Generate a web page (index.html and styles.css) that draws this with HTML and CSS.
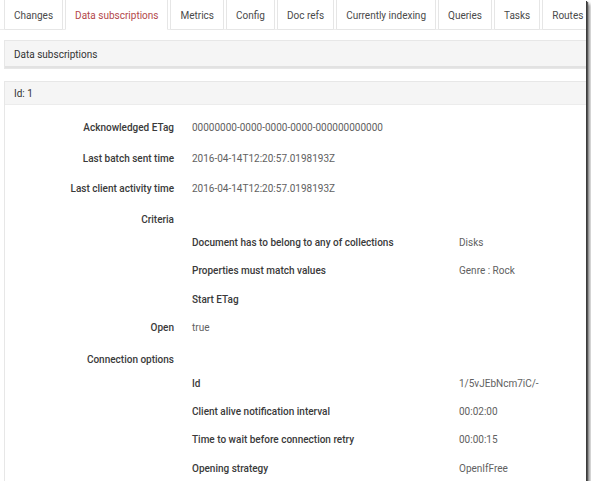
FILE: index.html
```html
<!DOCTYPE html>
<html lang="en">
<head>
<meta charset="utf-8">
<title>Data subscriptions</title>
<link rel="stylesheet" href="styles.css">
</head>
<body>
<div class="frame">
  <ul class="tabs">
    <li class="tab">Changes</li>
    <li class="tab active">Data subscriptions</li>
    <li class="tab">Metrics</li>
    <li class="tab">Config</li>
    <li class="tab">Doc refs</li>
    <li class="tab">Currently indexing</li>
    <li class="tab">Queries</li>
    <li class="tab">Tasks</li>
    <li class="tab">Routes</li>
  </ul>

  <section class="panel panel-title">
    <div class="panel-heading">Data subscriptions</div>
  </section>

  <section class="panel panel-sub">
    <div class="panel-heading">Id: 1</div>
    <div class="panel-body">
      <div class="row"><div class="label">Acknowledged ETag</div><div class="value">00000000-0000-0000-0000-000000000000</div></div>
      <div class="row"><div class="label">Last batch sent time</div><div class="value">2016-04-14T12:20:57.0198193Z</div></div>
      <div class="row"><div class="label">Last client activity time</div><div class="value">2016-04-14T12:20:57.0198193Z</div></div>

      <div class="row group"><div class="label">Criteria</div></div>
      <div class="nested">
        <div class="sub-row"><div class="sub-label">Document has to belong to any of collections</div><div class="value">Disks</div></div>
        <div class="sub-row"><div class="sub-label">Properties must match values</div><div class="value">Genre : Rock</div></div>
        <div class="sub-row"><div class="sub-label">Start ETag</div><div class="value"></div></div>
      </div>

      <div class="row row-open"><div class="label">Open</div><div class="value">true</div></div>

      <div class="row group"><div class="label">Connection options</div></div>
      <div class="nested">
        <div class="sub-row"><div class="sub-label">Id</div><div class="value">1/5vJEbNcm7iC/-</div></div>
        <div class="sub-row"><div class="sub-label">Client alive notification interval</div><div class="value">00:02:00</div></div>
        <div class="sub-row"><div class="sub-label">Time to wait before connection retry</div><div class="value">00:00:15</div></div>
        <div class="sub-row"><div class="sub-label">Opening strategy</div><div class="value">OpenIfFree</div></div>
      </div>
    </div>
  </section>
</div>
</body>
</html>
```

FILE: styles.css
```css
html, body {
  margin: 0;
  padding: 0;
  background: #ffffff;
}

body {
  font-family: Roboto, "Liberation Sans", Arial, sans-serif;
  font-size: 10px;
  color: #333333;
}

/* window with its drop shadow on the right and bottom */
.frame {
  width: 586px;
  height: 481px;
  overflow: hidden;
  background: #ffffff;
  box-shadow: 1px 1px 0 #3c3c3c, 2px 2px 1px #555555, 4px 4px 3px rgba(0, 0, 0, 0.45);
}

/* tab strip */
.tabs {
  list-style: none;
  display: flex;
  margin: -5px 0 0 0;
  padding: 0 0 0 4px;
  height: 35px;
  border-bottom: 1px solid #ececec;
  box-sizing: border-box;
}

.tab {
  flex: none;
  margin-right: 2px;
  padding: 5px 9px 0;
  height: 35px;
  line-height: 29px;
  box-sizing: border-box;
  border: 1px solid #e6e6e6;
  border-radius: 3px 3px 0 0;
  color: #4a4a4a;
  white-space: nowrap;
  background: #ffffff;
}

.tab.active {
  color: #b2474a;
  border-bottom-color: #ffffff;
}

/* panels */
.panel {
  margin-left: 4px;
  border: 1px solid #e7e7e7;
  border-right: none;
  background: #ffffff;
}

.panel-heading {
  background: #f5f5f5;
  padding-left: 9px;
  color: #333333;
}

.panel-title {
  margin-top: 10px;
}

.panel-title .panel-heading {
  height: 25px;
  line-height: 27px;
  border-bottom: 2px solid #e2e2e2;
}

.panel-sub {
  margin-top: 12px;
  border-bottom: none;
}

.panel-sub .panel-heading {
  height: 22px;
  line-height: 23px;
  border-bottom: 1px solid #ececec;
}

.panel-body {
  padding-top: 15px;
  height: 400px;
}

/* property rows */
.row {
  display: flex;
  height: 30.5px;
  line-height: 16px;
}

.row.group {
  height: 23.5px;
}

.row.row-open {
  height: 32px;
}

.label {
  flex: none;
  width: 169px;
  margin-right: 18px;
  text-align: right;
  font-weight: 500;
  color: #3a3a3a;
}

.value {
  color: #616161;
  white-space: nowrap;
}

.nested {
  margin-left: 187px;
}

.sub-row {
  display: flex;
  height: 28.4px;
  line-height: 16px;
}

.sub-label {
  flex: none;
  width: 267px;
  font-weight: 500;
  color: #3a3a3a;
  white-space: nowrap;
}
```
